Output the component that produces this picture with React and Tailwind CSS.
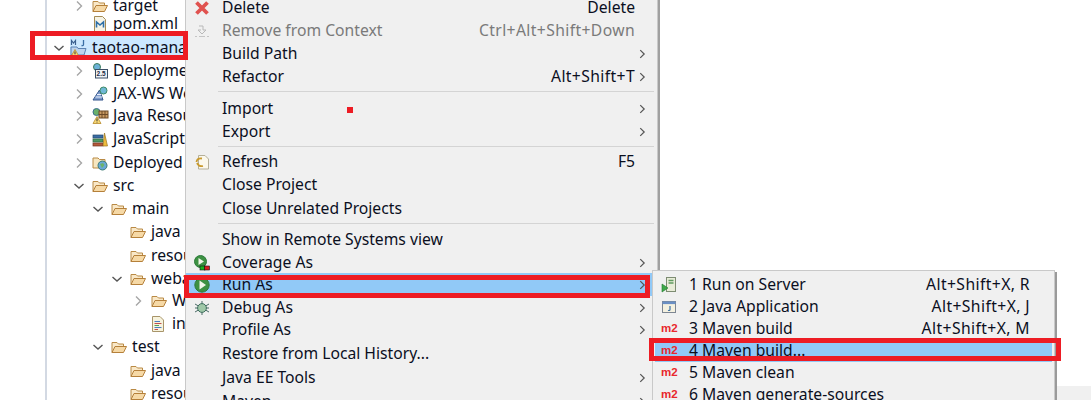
import React from "react";

const Chev = ({ c = "#a6a6a6" }) => (
  <svg width="16" height="16" viewBox="0 0 16 16" fill="none"><path d="M6 3.5 L10.5 8 L6 12.5" stroke={c} strokeWidth="1.4" /></svg>
);
const ChevDown = () => (
  <svg width="16" height="16" viewBox="0 0 16 16" fill="none"><path d="M3.5 6 L8 10 L12.5 6" stroke="#555" strokeWidth="1.4" /></svg>
);
const Folder = () => (
  <svg width="16" height="16" viewBox="0 0 16 16">
    <path d="M1 13.5 V3.5 H6 L7.5 5 H12.5 V7" fill="#f9e8c8" stroke="#b98a45" strokeWidth="1" />
    <path d="M1 13.5 L4 7.5 H15.5 L12.5 13.5 Z" fill="#f6d9a6" stroke="#b5803a" strokeWidth="1" />
  </svg>
);
const Pom = () => (
  <svg width="16" height="16" viewBox="0 0 16 16">
    <path d="M2.5 .5 H10.5 L13.5 3.5 V15.5 H2.5 Z" fill="#f5f3e6" stroke="#a58b55" />
    <path d="M4.5 11.5 V6 L8 9 L11.5 6 V11.5" fill="none" stroke="#2d6fa8" strokeWidth="1.6" />
  </svg>
);
const Warn = ({ x = 0, y = 9 }) => (
  <g transform={`translate(${x} ${y})`}>
    <path d="M4 0 L8 7 H0 Z" fill="#f7d774" stroke="#b88a2a" strokeWidth=".8" />
    <path d="M4 2 V4.5 M4 5.2 V6" stroke="#333" strokeWidth="1" />
  </g>
);
const Project = () => (
  <svg width="18" height="18" viewBox="0 0 18 18">
    <path d="M1 16 V8 H7 L8 9.5 H16 L14 16 Z" fill="#bcd3ee" stroke="#5b83b3" />
    <path d="M1.5 6 V1.5 L3.5 4 L5.5 1.5 V6" fill="none" stroke="#3a5f8f" strokeWidth="1.2" />
    <path d="M13.5 1 V5.5 Q13.5 7 11.5 6.5" fill="none" stroke="#3a6ea5" strokeWidth="1.3" />
    <Warn x={1} y={10.5} />
  </svg>
);
const Deploy = () => (
  <svg width="16" height="16" viewBox="0 0 16 16">
    <circle cx="5" cy="4" r="3.5" fill="#6cb2d8" stroke="#3c7b5a" />
    <rect x="3.5" y="6.5" width="12" height="8.5" fill="#eef2f5" stroke="#3a4f66" />
    <text x="4.6" y="13.2" fontSize="6.5" fontWeight="700" fill="#1b2a44" fontFamily="Liberation Sans, sans-serif">2.5</text>
  </svg>
);
const Jax = () => (
  <svg width="16" height="16" viewBox="0 0 16 16">
    <path d="M1 14 L7.5 4 L11 14 Z" fill="#7f9ccc" stroke="#33558c" />
    <path d="M3.5 11 H10 M5 8.5 H9" stroke="#eaf0fa" strokeWidth="1" />
    <circle cx="11.5" cy="4.5" r="3.5" fill="#6fb8d6" stroke="#3f8a66" />
  </svg>
);
const JavaRes = () => (
  <svg width="18" height="16" viewBox="0 0 18 16">
    <circle cx="4.5" cy="4" r="3.5" fill="#69b06b" stroke="#3b6f8f" />
    <rect x="7" y="3" width="9" height="7" fill="#c89a63" stroke="#6c4a27" />
    <path d="M10 3 V10 M13 3 V10 M7 6.5 H16" stroke="#6c4a27" strokeWidth="1" />
    <Warn x={1} y={8.5} />
  </svg>
);
const JsRes = () => (
  <svg width="16" height="16" viewBox="0 0 16 16">
    <rect x="1" y="4" width="10" height="3" fill="#3b6ea5" stroke="#24476d" strokeWidth=".7" />
    <rect x="1" y="8" width="10" height="3" fill="#4f9a63" stroke="#2d6340" strokeWidth=".7" />
    <rect x="1" y="12" width="10" height="3" fill="#b55a3c" stroke="#70351f" strokeWidth=".7" />
    <path d="M11 15 L12.5 2 L15.5 15 Z" fill="#eebc3d" stroke="#9b7420" strokeWidth=".7" />
  </svg>
);
const Deployed = () => (
  <svg width="16" height="16" viewBox="0 0 16 16">
    <path d="M1 13 V3 H6 L7.5 4.5 H13 V13 Z" fill="#f7e6c0" stroke="#b98a45" />
    <circle cx="10.5" cy="10.5" r="4.5" fill="#6aa8d8" stroke="#3a7a70" />
    <path d="M8 9 L11 8 L12.5 10 L10 13 Z" fill="#6db36a" />
  </svg>
);
const Jsp = () => (
  <svg width="14" height="16" viewBox="0 0 14 16">
    <path d="M1.5 .5 H9 L12.5 4 V15.5 H1.5 Z" fill="#f7f3dd" stroke="#a8956a" />
    <path d="M3.5 5.5 H9" stroke="#4a7fc0" /><path d="M3.5 7.5 H10.5" stroke="#c0504d" /><path d="M3.5 9.5 H8" stroke="#52a05a" /><path d="M3.5 11.5 H10.5" stroke="#4a7fc0" /><path d="M3.5 13.5 H7" stroke="#c0504d" />
  </svg>
);
const Del = () => (
  <svg width="16" height="16" viewBox="0 0 16 16"><path d="M2.5 2.5 L13.5 13.5 M13.5 2.5 L2.5 13.5" stroke="#e0524f" strokeWidth="3.8" /></svg>
);
const RemoveCtx = () => (
  <svg width="16" height="16" viewBox="0 0 16 16" fill="none">
    <path d="M5 3 H9 V7 H12 L8 11 L4 7 H7" stroke="#b8b8b8" />
    <path d="M1 13.5 H3 M13 13.5 H15 M5 13.5 H11" stroke="#c4c4c4" />
  </svg>
);
const Refresh = () => (
  <svg width="16" height="16" viewBox="0 0 16 16" fill="none">
    <path d="M4.5 1.5 H11 L14.5 5 V15 H4.5 Z" fill="#fbf8ec" stroke="#b5b09a" />
    <path d="M8 4.5 Q3 4 2.5 8" stroke="#c99a2e" strokeWidth="1.8" />
    <path d="M3 9 Q5 13 9 12" stroke="#c99a2e" strokeWidth="1.8" />
  </svg>
);
const Run = () => (
  <svg width="16" height="16" viewBox="0 0 16 16">
    <circle cx="8" cy="8" r="7.2" fill="#3d9142" stroke="#2c7a3a" />
    <path d="M5.5 3.5 L12 8 L5.5 12.5 Z" fill="#f1f6e8" />
  </svg>
);
const Coverage = () => (
  <svg width="16" height="16" viewBox="0 0 16 16">
    <circle cx="6.5" cy="6.5" r="6" fill="#3d9142" stroke="#2c7a3a" />
    <path d="M4.5 3 L10 6.5 L4.5 10 Z" fill="#f1f6e8" />
    <rect x="6" y="11" width="5" height="4" fill="#19b31f" stroke="#111" strokeWidth=".6" />
    <rect x="10.5" y="11" width="5" height="4" fill="#d51d1d" stroke="#111" strokeWidth=".6" />
  </svg>
);
const Bug = () => (
  <svg width="16" height="16" viewBox="0 0 16 16" fill="none">
    <path d="M1 4 L15 12 M15 4 L1 12 M8 1 V15 M1 8 H15" stroke="#4a6b66" strokeWidth="1" />
    <circle cx="8" cy="8" r="4.4" fill="#9fc8a8" stroke="#3f6f5f" />
  </svg>
);
const Server = () => (
  <svg width="16" height="16" viewBox="0 0 16 16">
    <rect x="5.5" y=".5" width="9" height="14" fill="#e8ecd8" stroke="#7d8c72" />
    <path d="M7.5 3.5 H12.5 M7.5 6 H12.5" stroke="#5f9a5f" strokeWidth="1.4" />
    <path d="M1 7 L7 11 L1 15 Z" fill="#3fa84a" stroke="#20792b" strokeWidth=".6" />
  </svg>
);
const JavaApp = () => (
  <svg width="16" height="16" viewBox="0 0 16 16">
    <rect x="1.5" y="2.5" width="13" height="11" fill="#f4f1e0" stroke="#7d8692" />
    <rect x="1.5" y="2.5" width="13" height="2.6" fill="#6a8fc4" />
    <path d="M9 7 V10.5 Q9 12 7 11.2" fill="none" stroke="#3a6ea5" strokeWidth="1.2" />
  </svg>
);
const M2 = () => <span className="text-[11.5px] font-bold leading-none text-[#e8282d] [font-family:'Liberation_Sans',sans-serif]">m2</span>;

const tree = [
  { h: "h-[12px]", pl: "pl-[24px]", ch: "r", icon: <Folder />, t: "target" },
  { h: "h-[24px]", pl: "pl-[24px]", icon: <Pom />, t: "pom.xml" },
  { h: "h-[23px]", pl: "pl-[4px]", ch: "d", icon: <Project />, t: "taotao-manager-web", sel: true },
  { h: "h-[23px]", pl: "pl-[24px]", ch: "r", icon: <Deploy />, t: "Deployment Descriptor" },
  { h: "h-[23px]", pl: "pl-[24px]", ch: "r", icon: <Jax />, t: "JAX-WS Web Services" },
  { h: "h-[22px]", pl: "pl-[24px]", ch: "r", icon: <JavaRes />, t: "Java Resources" },
  { h: "h-[24px]", pl: "pl-[24px]", ch: "r", icon: <JsRes />, t: "JavaScript Resources" },
  { h: "h-[24px]", pl: "pl-[24px]", ch: "r", icon: <Deployed />, t: "Deployed Resources" },
  { h: "h-[22px]", pl: "pl-[24px]", ch: "d", icon: <Folder />, t: "src" },
  { h: "h-[23px]", pl: "pl-[43px]", ch: "d", icon: <Folder />, t: "main" },
  { h: "h-[24px]", pl: "pl-[62px]", icon: <Folder />, t: "java" },
  { h: "h-[23px]", pl: "pl-[62px]", icon: <Folder />, t: "resources" },
  { h: "h-[23px]", pl: "pl-[62px]", ch: "d", icon: <Folder />, t: "webapp" },
  { h: "h-[22px]", pl: "pl-[83px]", ch: "r", icon: <Folder />, t: "WEB-INF" },
  { h: "h-[23px]", pl: "pl-[83px]", icon: <Jsp />, t: "index.jsp" },
  { h: "h-[24px]", pl: "pl-[43px]", ch: "d", icon: <Folder />, t: "test" },
  { h: "h-[23px]", pl: "pl-[62px]", icon: <Folder />, t: "java" },
  { h: "h-[23px]", pl: "pl-[62px]", icon: <Folder />, t: "resources" },
];

const menu = [
  { h: "h-[24px]", t: "Delete", k: "Delete", icon: <Del /> },
  { h: "h-[22px]", t: "Remove from Context", k: "Ctrl+Alt+Shift+Down", wide: true, off: true, icon: <RemoveCtx /> },
  { h: "h-[23px]", t: "Build Path", a: true },
  { h: "h-[24px]", t: "Refactor", k: "Alt+Shift+T", wide: true, a: true },
  { sep: "h-[8px] pt-[2px]" },
  { h: "h-[24px]", t: "Import", a: true },
  { h: "h-[22px]", t: "Export", a: true },
  { sep: "h-[8px] pt-[3px]" },
  { h: "h-[22px]", t: "Refresh", k: "F5", icon: <Refresh /> },
  { h: "h-[24px]", t: "Close Project" },
  { h: "h-[24px]", t: "Close Unrelated Projects" },
  { sep: "h-[7px] pt-[2px]" },
  { h: "h-[24px]", t: "Show in Remote Systems view" },
  { h: "h-[21px]", t: "Coverage As", a: true, icon: <Coverage /> },
  { h: "h-[23px]", t: "Run As", a: true, hl: true, icon: <Run /> },
  { h: "h-[23px]", t: "Debug As", a: true, icon: <Bug /> },
  { h: "h-[22px]", t: "Profile As", a: true },
  { h: "h-[25px]", t: "Restore from Local History..." },
  { h: "h-[24px]", t: "Java EE Tools", a: true },
  { h: "h-[24px]", t: "Maven", a: true },
];

const sub = [
  { t: "1 Run on Server", k: "Alt+Shift+X, R", icon: <Server /> },
  { t: "2 Java Application", k: "Alt+Shift+X, J", icon: <JavaApp /> },
  { t: "3 Maven build", k: "Alt+Shift+X, M", icon: <M2 /> },
  { t: "4 Maven build...", hl: true, icon: <M2 /> },
  { t: "5 Maven clean", icon: <M2 /> },
  { t: "6 Maven generate-sources", icon: <M2 /> },
];

export default function App() {
  return (
    <div className="relative flex h-[400px] w-[1091px] overflow-hidden bg-white text-[15.7px] text-[#0b0f1e] [font-family:'Noto_Sans',sans-serif]">
      <div className="w-[45px] shrink-0 border-r-2 border-[#d3d9e3] box-content" />
      <div className="w-[138px] shrink-0 overflow-hidden">
        {tree.map((r, i) => (
          <div key={i} className={`flex items-center ${r.h} ${r.pl}`}>
            <div className="flex w-4 shrink-0 items-center justify-center">
              {r.ch === "r" && <Chev />}
              {r.ch === "d" && <ChevDown />}
            </div>
            <div className={`flex h-full items-center ${r.sel ? "ml-[3px] flex-1 gap-[4px] bg-[#cce8ff]" : ""}`}>
              <div className={`flex shrink-0 items-center ${r.sel ? "" : "w-[26px] pl-[5px]"}`}>{r.icon}</div>
              <span className="whitespace-nowrap">{r.t}</span>
            </div>
          </div>
        ))}
      </div>
      <div className="-mt-[4px] h-[420px] w-[473px] shrink-0 border-x border-[#c9c9c9] bg-[#f0f0f0] shadow-[2px_0_0_#a0a0a0]">
        {menu.map((m, i) =>
          m.sep ? (
            <div key={i} className={`${m.sep} pl-[32px] pr-[3px]`}>
              <div className="h-[1px] w-full bg-[#d4d4d4]" />
            </div>
          ) : (
            <div key={i} className={`flex items-center pr-[8px] ${m.h} ${m.hl ? "bg-[#91c9f7]" : ""} ${m.off ? "text-[#7a7a7a]" : ""}`}>
              <div className="flex w-[36px] shrink-0 items-center pl-[8px]">{m.icon}</div>
              <span className="flex-1 whitespace-nowrap">{m.t}</span>
              {m.k && <span className={`whitespace-nowrap ${m.wide ? "tracking-[0.38px]" : ""}`}>{m.k}</span>}
              <div className="flex w-[14px] shrink-0 items-center justify-center">{m.a && <Chev c="#555" />}</div>
            </div>
          )
        )}
      </div>
      <div className="flex flex-1 flex-col justify-end">
        <div className="h-[14px] bg-[#f0f0f0]" />
      </div>

      <div className="absolute left-[652px] top-[270px] h-[140px] w-[403px] border border-[#c9c9c9] bg-[#f0f0f0] pt-[3px] shadow-[2px_2px_0_#9a9a9a]">
        {sub.map((s, i) => (
          <div key={i} className={`mx-[2px] flex h-[22px] items-center pr-[22px] ${s.hl ? "bg-[#91c9f7]" : ""}`}>
            <div className="flex w-[34px] shrink-0 items-center pl-[6px]">{s.icon}</div>
            <span className="flex-1 whitespace-nowrap">{s.t}</span>
            {s.k && <span className="whitespace-nowrap tracking-[0.4px]">{s.k}</span>}
          </div>
        ))}
      </div>

      <div className="absolute left-[30px] top-[31px] h-[29px] w-[158px] border-[5px] border-[#ed1c24]" />
      <div className="absolute left-[184px] top-[275px] h-[23px] w-[466px] border-[5px] border-[#ed1c24]" />
      <div className="absolute left-[649px] top-[338px] h-[23px] w-[412px] border-[5px] border-[#ed1c24]" />
      <div className="absolute left-[347px] top-[107px] h-[6px] w-[6px] bg-[#ed1c24]" />
    </div>
  );
}
